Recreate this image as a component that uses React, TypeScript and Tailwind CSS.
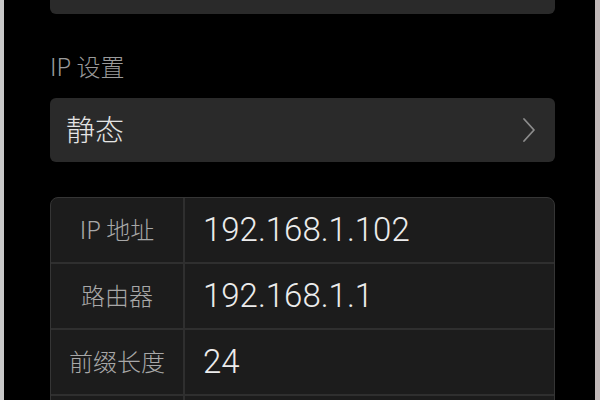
const rows = [
  { label: "IP 地址", value: "192.168.1.102" },
  { label: "路由器", value: "192.168.1.1" },
  { label: "前缀长度", value: "24" },
  { label: "", value: "" },
];

const App = () => {
  return (
    <div
      className="w-[600px] h-[400px] flex bg-black overflow-hidden"
      style={{ fontFamily: '"Liberation Sans", "Noto Sans CJK SC", sans-serif' }}
    >
      {/* left frame edge */}
      <div className="w-[4px] shrink-0 bg-[#c9c9c9]" />

      <div className="flex-1 pl-[46px] pr-[40px] flex flex-col">
        {/* previous card, cut off */}
        <div className="h-[14px] shrink-0 bg-[#2a2a2a] rounded-b-[6px]" />

        <div className="mt-[37px] h-[30px] shrink-0 leading-[30px] font-['Noto_Sans_CJK_SC',sans-serif] text-[24px] font-light text-[#9a9a9a]">
          IP 设置
        </div>

        {/* mode selector */}
        <div className="mt-[17px] h-[64px] shrink-0 bg-[#2a2a2a] rounded-[6px] flex items-center justify-between pl-[16px] pr-[19px]">
          <span className="font-['Noto_Sans_CJK_SC',sans-serif] text-[29px] font-light text-[#e4e4e4] -mt-[2px]">
            静态
          </span>
          <svg width="14" height="26" viewBox="0 0 14 26" fill="none">
            <polyline
              points="2,2 12,13 2,24"
              stroke="#8c8c8c"
              strokeWidth="1.8"
              strokeLinecap="round"
              strokeLinejoin="round"
            />
          </svg>
        </div>

        {/* address table */}
        <div className="mt-[35px] shrink-0 bg-[#1c1c1c] border border-[#353535] rounded-t-[8px] overflow-hidden">
          {rows.map((row, i) => (
            <div
              key={i}
              className={`flex h-[66px] ${i < rows.length - 1 ? "border-b-2 border-[#2f2f2f]" : ""}`}
            >
              <div className="w-[134px] shrink-0 border-r-2 border-[#2f2f2f] flex items-center justify-center font-['Noto_Sans_CJK_SC',sans-serif] text-[24px] font-light text-[#a8a8a8] pb-[3px]">
                {row.label}
              </div>
              <div className="flex-1 flex items-center pl-[18px] font-['Roboto',sans-serif] text-[33px] font-light text-[#ececec]">
                {row.value}
              </div>
            </div>
          ))}
        </div>
      </div>

      {/* right frame edge */}
      <div className="w-[5px] shrink-0 bg-[#c2b9b9]" />
    </div>
  );
};

export default App;
